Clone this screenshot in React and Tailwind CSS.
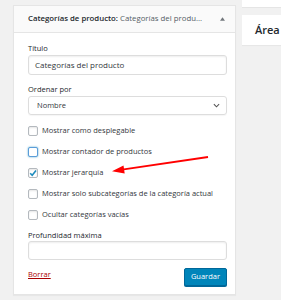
import React from "react";

const font = { fontFamily: '"Open Sans", "Noto Sans", sans-serif' };

const Check = ({ label, checked, focused }) => (
  <label className="flex items-center gap-[4px] h-[21px] text-[7.5px] text-[#32373c] whitespace-nowrap">
    <span
      className={`relative w-[10px] h-[10px] rounded-[2px] bg-white shrink-0 ${
        focused
          ? "border border-[#5b9dd9] shadow-[0_0_2px_rgba(30,140,190,0.8)]"
          : "border border-[#b4b9be] shadow-[inset_0_1px_2px_rgba(0,0,0,0.1)]"
      }`}
    >
      {checked && (
        <svg viewBox="0 0 10 10" className="absolute inset-0 w-[10px] h-[10px] -ml-[1px] -mt-[1px]">
          <path d="M2.2 5.2 L4.2 7.2 L8 2.6" fill="none" stroke="#1e8cbe" strokeWidth="1.6" />
        </svg>
      )}
    </span>
    <span>{label}</span>
  </label>
);

export default function App() {
  return (
    <div className="relative w-[281px] h-[300px] overflow-hidden bg-[#f1f1f1] flex" style={font}>
      <div className="ml-[13px] mt-[5px] w-[223px] shrink-0 self-start bg-white border border-[#e5e5e5] shadow-[0_1px_1px_rgba(0,0,0,0.04)]">
        <div className="h-[27px] flex items-center justify-between pl-[14px] pr-[10px] bg-[#fafafa] border-b border-[#e5e5e5] text-[7.8px] text-[#23282d]">
          <span className="truncate">
            <span className="font-semibold">Categorías de producto:</span>{" "}
            <span className="text-[#555d66]">Categorías del produ...</span>
          </span>
          <svg viewBox="0 0 6 4" className="w-[5px] h-[4px] shrink-0 ml-2">
            <path d="M0 4 L3 0 L6 4 Z" fill="#72777c" />
          </svg>
        </div>

        <div className="pt-[8px] pl-[14px] pr-[8px] pb-[8px] text-[#23282d]">
          <p className="text-[7.5px] leading-[14px]">Título</p>
          <div className="h-[20px] flex items-center px-[6px] border border-[#ddd] rounded-[3px] shadow-[inset_0_1px_2px_rgba(0,0,0,0.07)] text-[8px] text-[#32373c]">
            Categorías del producto
          </div>

          <p className="mt-[7px] text-[7.5px] leading-[14px]">Ordenar por</p>
          <div className="h-[19px] flex items-center justify-between pl-[8px] pr-[6px] border border-[#ddd] rounded-[3px] shadow-[0_1px_1px_rgba(0,0,0,0.04)] text-[7.5px] text-[#32373c]">
            <span>Nombre</span>
            <svg viewBox="0 0 8 5" className="w-[7px] h-[5px]">
              <path d="M1 1 L4 4 L7 1" fill="none" stroke="#555" strokeWidth="1.2" />
            </svg>
          </div>

          <div className="mt-[5px]">
            <Check label="Mostrar como desplegable" />
            <Check label="Mostrar contador de productos" focused />
            <Check label="Mostrar jerarquía" checked />
            <Check label="Mostrar solo subcategorías de la categoría actual" />
            <Check label="Ocultar categorías vacías" />
          </div>

          <p className="mt-[4px] text-[7.5px] leading-[12px]">Profundidad máxima</p>
          <div className="h-[19px] border border-[#ddd] rounded-[3px] shadow-[inset_0_1px_2px_rgba(0,0,0,0.07)]" />

          <div className="mt-[8px] flex items-start justify-between">
            <a className="text-[7.5px] leading-[12px] text-[#a00] underline">Borrar</a>
            <button className="h-[18px] px-[6px] rounded-[2px] bg-[#0085ba] border border-[#006799] text-white text-[7.5px] shadow-[0_1px_0_#006799]">
              Guardar
            </button>
          </div>
        </div>
      </div>

      <div className="ml-[6px] flex-1 min-w-0 flex flex-col overflow-hidden">
        <div className="h-[8px] bg-white border-b border-[#e5e5e5]" />
        <div className="mt-[7px] h-[30px] bg-white shadow-[0_1px_1px_rgba(0,0,0,0.04)] flex items-center pl-[13px] text-[11px] font-semibold text-[#23282d] whitespace-nowrap overflow-hidden">
          Área
        </div>
      </div>

      <svg className="absolute left-0 top-0 w-[281px] h-[300px] pointer-events-none" viewBox="0 0 281 300">
        <line x1="208" y1="157" x2="122" y2="169.7" stroke="#f00" strokeWidth="1.8" />
        <path d="M112 171.2 L123.5 165.5 L124.7 173.5 Z" fill="#f00" />
      </svg>
    </div>
  );
}
